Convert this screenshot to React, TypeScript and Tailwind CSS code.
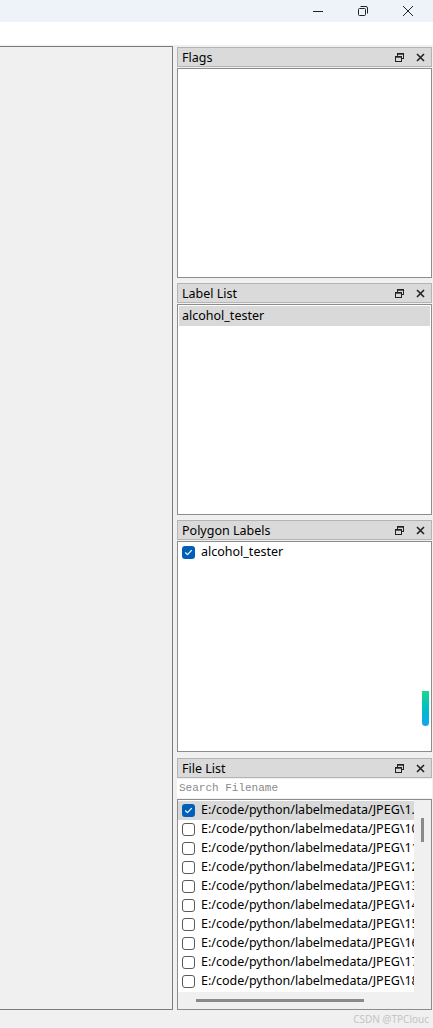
const files = ["1", "10", "11", "12", "13", "14", "15", "16", "17", "18"];

const font = { fontFamily: '"Noto Sans", "Open Sans", sans-serif' };

function CheckBox({ checked }: { checked?: boolean }) {
  if (checked) {
    return (
      <span className="flex h-[13px] w-[13px] shrink-0 items-center justify-center rounded-[3px] bg-[#005fb8]">
        <svg width="9" height="9" viewBox="0 0 9 9" fill="none">
          <path d="M1.5 4.8 3.5 6.6 7.5 2.4" stroke="white" strokeWidth="1.2" strokeLinecap="round" strokeLinejoin="round" />
        </svg>
      </span>
    );
  }
  return <span className="h-[13px] w-[13px] shrink-0 rounded-[3px] border border-[#5a5a5a] bg-white" />;
}

function DockTitle({ title }: { title: string }) {
  return (
    <div className="flex h-[20px] items-center border border-[#b4b4b4] bg-[#dadada] pl-[4px] pr-[6px]">
      <span className="flex-1 pt-[2px] text-[12.5px] leading-none text-black">{title}</span>
      <svg width="9" height="9" viewBox="0 0 9 9" className="mr-[12px]">
        <rect x="2.5" y="0.5" width="6" height="5" fill="none" stroke="#222" />
        <rect x="0.5" y="3.5" width="6" height="5" fill="#dadada" stroke="#222" />
        <line x1="0.5" y1="4.2" x2="6.5" y2="4.2" stroke="#222" />
        <line x1="2.5" y1="1.2" x2="8.5" y2="1.2" stroke="#222" />
      </svg>
      <svg width="9" height="9" viewBox="0 0 9 9">
        <path d="M1 1 8 8M8 1 1 8" stroke="#222" strokeWidth="1.6" />
      </svg>
    </div>
  );
}

export default function App() {
  return (
    <div className="h-[1028px] w-[433px] overflow-hidden bg-[#f0f0f0]" style={font}>
      {/* window chrome */}
      <div className="flex h-[22px] items-center justify-end bg-[#eef2f9]">
        <svg width="12" height="12" viewBox="0 0 12 12" className="mr-[33px]">
          <line x1="1" y1="6.5" x2="11" y2="6.5" stroke="#222" />
        </svg>
        <svg width="12" height="12" viewBox="0 0 12 12" className="mr-[33px]">
          <rect x="1.5" y="3.5" width="7" height="7" rx="1" fill="none" stroke="#222" />
          <path d="M3.5 1.5h5.5a1.5 1.5 0 0 1 1.5 1.5v5.5" fill="none" stroke="#222" />
        </svg>
        <svg width="12" height="12" viewBox="0 0 12 12" className="mr-[19px]">
          <path d="M1 1 11 11M11 1 1 11" stroke="#222" />
        </svg>
      </div>
      <div className="h-[23px] bg-white" />

      <div className="flex gap-[4px] pt-[1px]">
        {/* canvas */}
        <div className="h-[964px] w-[173px] border-y border-r border-[#7c7c7c] bg-[#f0f0f0]" />

        {/* docks */}
        <div className="flex w-[255px] flex-col pt-[1px]">
          <DockTitle title="Flags" />
          <div className="mt-[1px] h-[210px] border border-[#8c8c8c] bg-white" />

          <div className="mt-[5px]">
            <DockTitle title="Label List" />
          </div>
          <div className="mt-[1px] h-[211px] border border-[#8c8c8c] bg-white p-[1px]">
            <div className="flex h-[20px] items-center bg-[#d9d9d9] pl-[3px] text-[12.5px] text-black">alcohol_tester</div>
          </div>

          <div className="mt-[5px]">
            <DockTitle title="Polygon Labels" />
          </div>
          <div className="relative mt-[1px] h-[211px] border border-[#8c8c8c] bg-white">
            <div className="flex h-[20px] items-center gap-[6px] pl-[4px] pt-[1px] text-[12.5px] text-black">
              <CheckBox checked />
              <span>alcohol_tester</span>
            </div>
            <div className="absolute right-[2px] top-[149px] h-[35px] w-[7px] rounded-b-[4px] bg-gradient-to-b from-[#1ed68a] to-[#18a2f2]" />
          </div>

          <div className="mt-[6px]">
            <DockTitle title="File List" />
          </div>
          <div className="mt-[1px] flex h-[19px] items-center bg-white pl-[2px] text-[11px] text-[#8a8a8a]" style={{ fontFamily: '"Liberation Mono", monospace' }}>
            Search Filename
          </div>
          <div className="mt-[1px] flex h-[211px] flex-col border border-[#8c8c8c] bg-[#f0f0f0]">
            <div className="flex flex-1">
              <div className="flex w-[236px] flex-col overflow-hidden bg-white pt-[1px]">
                {files.map((n, i) => (
                  <div
                    key={n}
                    className={`flex h-[19px] shrink-0 items-center gap-[6px] pl-[4px] text-[12.5px] whitespace-nowrap text-black ${i === 0 ? "bg-[#d9d9d9]" : ""}`}
                  >
                    <CheckBox checked={i === 0} />
                    <span>{`E:/code/python/labelmedata/JPEG\\${n}.jpg`}</span>
                  </div>
                ))}
              </div>
              <div className="flex flex-1 justify-center pt-[18px]">
                <div className="h-[24px] w-[3px] bg-[#8a8a8a]" />
              </div>
            </div>
            <div className="flex h-[17px] items-center pl-[18px]">
              <div className="h-[3px] w-[168px] bg-[#8a8a8a]" />
            </div>
          </div>
          <div className="mt-[2px] pr-[3px] text-right text-[10px] text-[#c4c4c4]">CSDN @TPClouc</div>
        </div>
      </div>
    </div>
  );
}
